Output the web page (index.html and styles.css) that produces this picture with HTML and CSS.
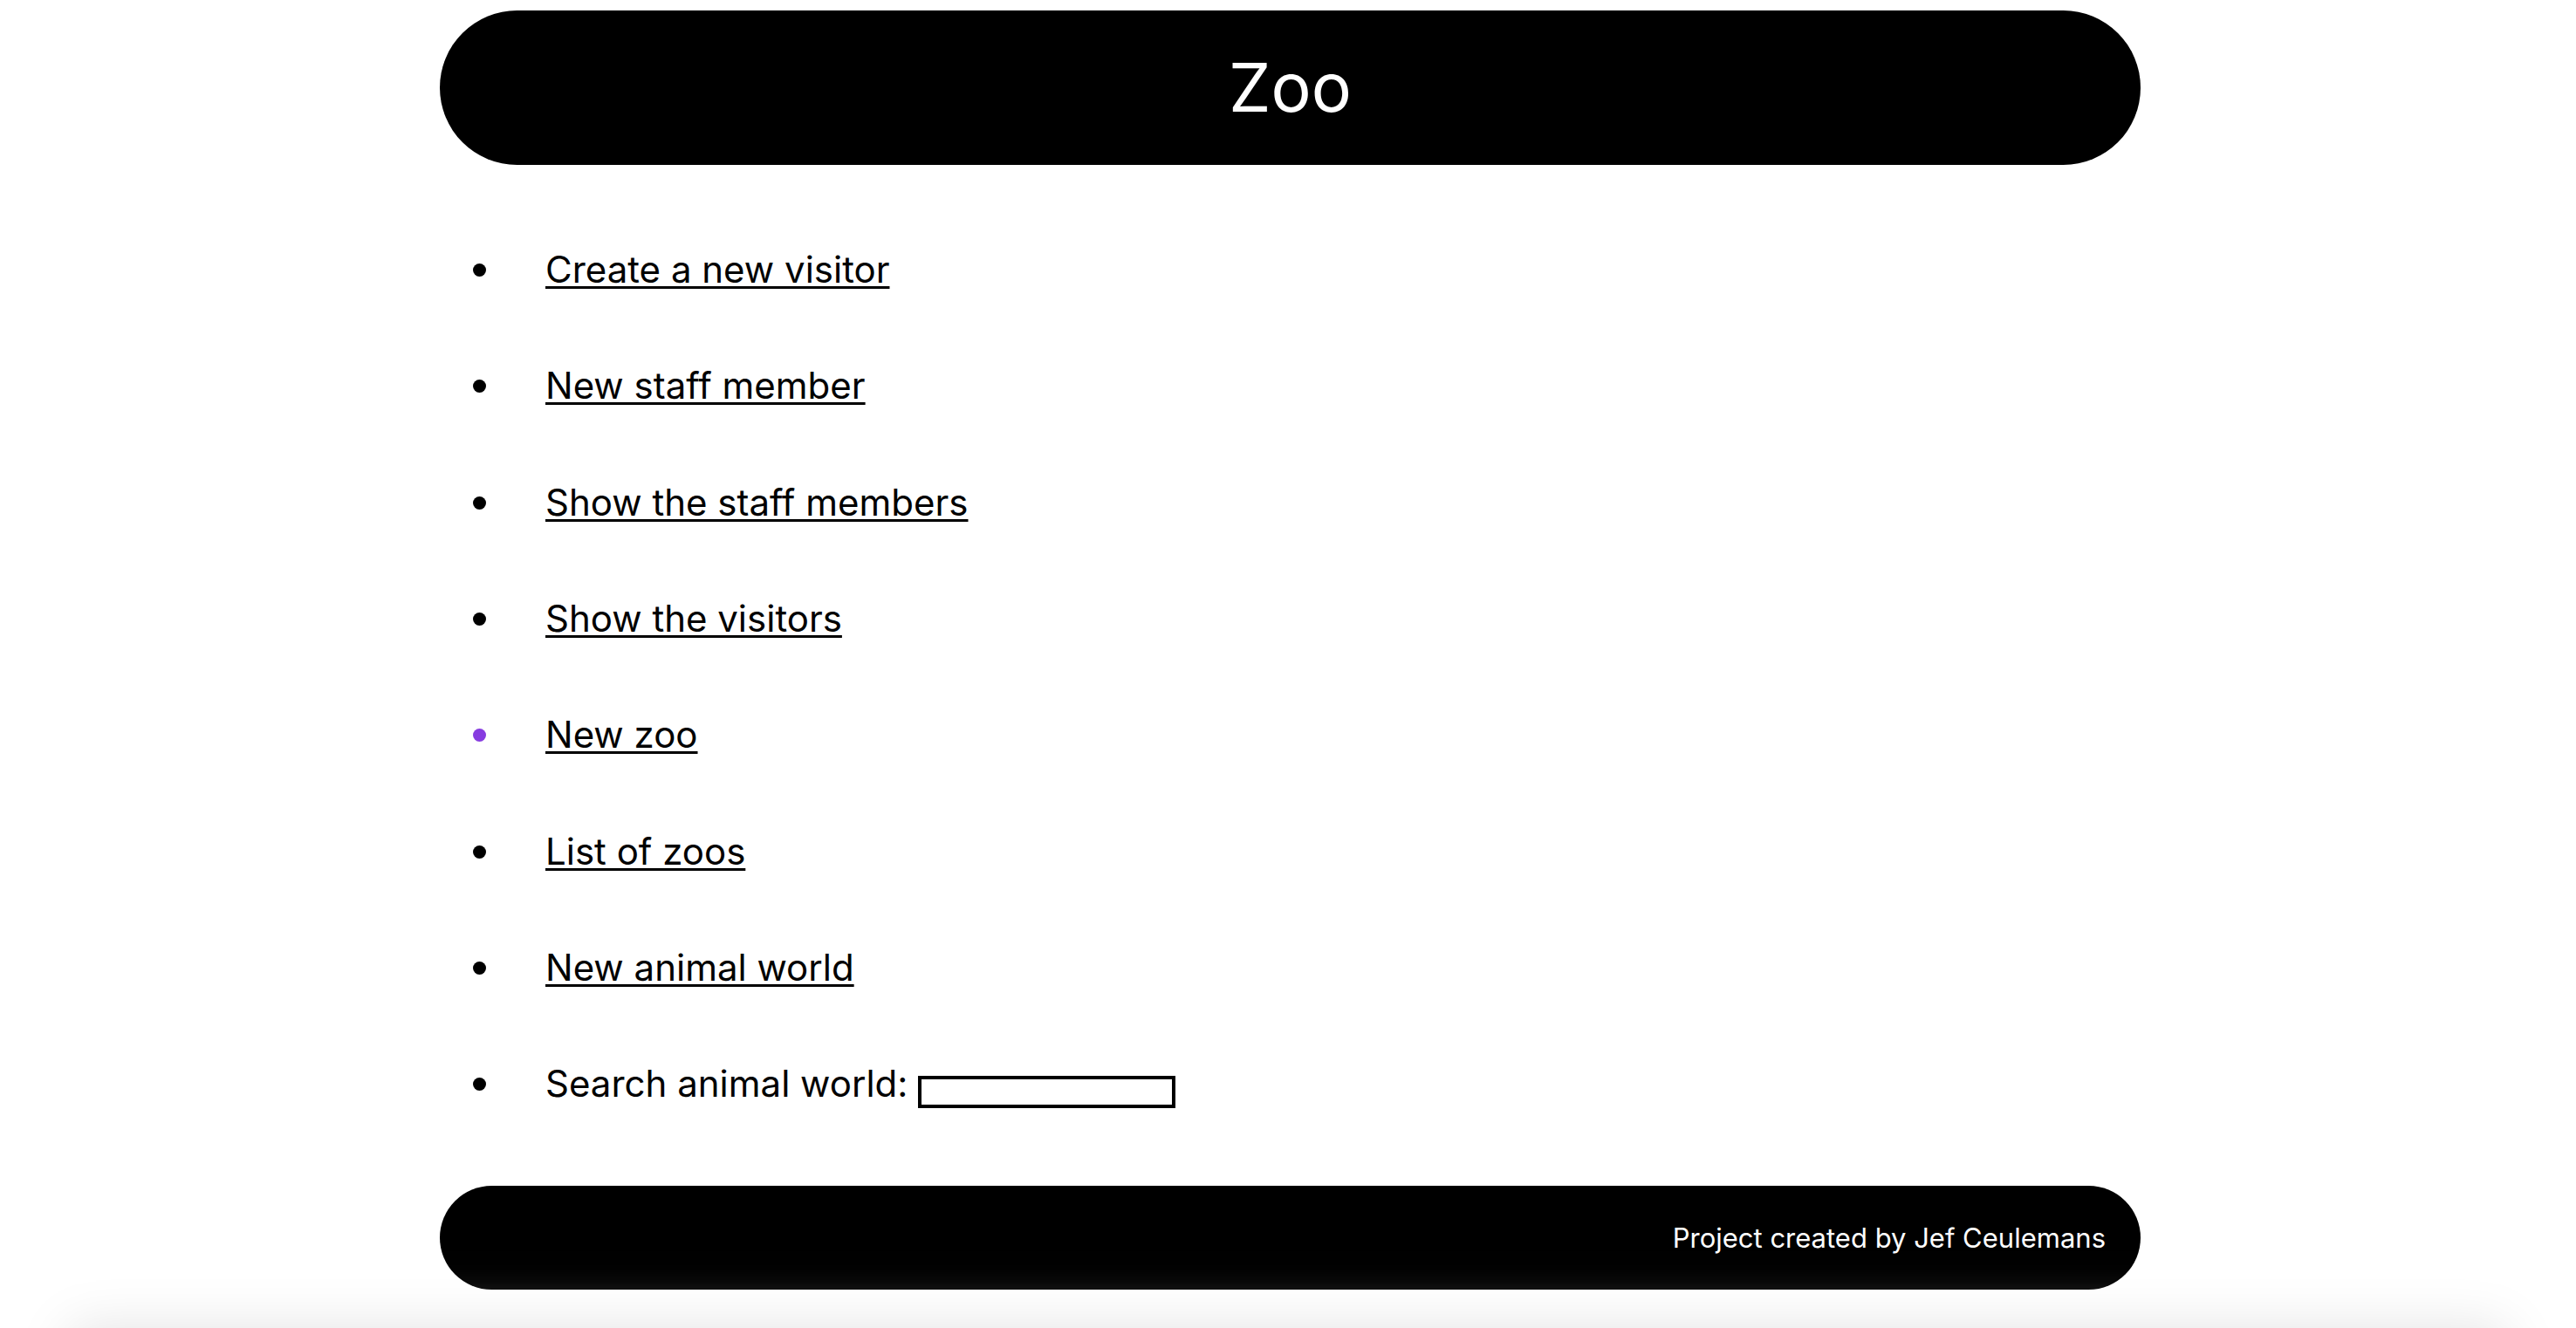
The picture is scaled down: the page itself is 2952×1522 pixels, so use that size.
FILE: index.html
```html
<!DOCTYPE html>
<html lang="en">
<head>
<meta charset="utf-8">
<title>Zoo</title>
<link rel="stylesheet" href="styles.css">
</head>
<body>
<div class="page">
  <header class="site-header">
    <h1 class="title">Zoo</h1>
  </header>
  <ul class="menu">
    <li class="menu-item"><a href="#" class="menu-link">Create a new visitor</a></li>
    <li class="menu-item"><a href="#" class="menu-link">New staff member</a></li>
    <li class="menu-item"><a href="#" class="menu-link">Show the staff members</a></li>
    <li class="menu-item"><a href="#" class="menu-link">Show the visitors</a></li>
    <li class="menu-item menu-item--active"><a href="#" class="menu-link">New zoo</a></li>
    <li class="menu-item"><a href="#" class="menu-link">List of zoos</a></li>
    <li class="menu-item"><a href="#" class="menu-link">New animal world</a></li>
    <li class="menu-item"><span class="search-label">Search animal world:</span> <input class="search-input" type="text"></li>
  </ul>
  <footer class="site-footer">
    <p class="credit">Project created by Jef Ceulemans</p>
  </footer>
</div>
<div class="fold-shadow"></div>
</body>
</html>
```

FILE: styles.css
```css
html, body {
  margin: 0;
  padding: 0;
  background: #ffffff;
}

body {
  padding-left: 5px;
  font-family: "Inter", "Liberation Sans", sans-serif;
  color: #000000;
  overflow: hidden;
}

.page {
  width: 1949px;
  margin: 0 auto;
}

.site-header {
  margin-top: 12px;
  height: 177px;
  background: #000000;
  border-radius: 89px;
  display: flex;
  align-items: center;
  justify-content: center;
}

.title {
  margin: 0;
  color: #ffffff;
  font-size: 77px;
  font-weight: 400;
  line-height: 1;
  letter-spacing: 0;
}

.menu {
  list-style: none;
  margin: 53px 0 0 0;
  padding: 0;
}

.menu-item {
  height: 133.33px;
  line-height: 133.33px;
  font-size: 42px;
  padding-left: 121px;
  position: relative;
}

.menu-item::before {
  content: "";
  position: absolute;
  left: 38px;
  top: 60px;
  width: 15px;
  height: 15px;
  border-radius: 50%;
  background: #000000;
}

.menu-item--active::before {
  background: #873ce0;
}

.menu-link {
  color: #000000;
  text-decoration: underline;
  text-decoration-thickness: 3px;
  text-underline-offset: 4px;
}

.search-label {
  color: #000000;
}

.search-input {
  box-sizing: border-box;
  width: 295px;
  height: 37px;
  border: 4px solid #000000;
  border-radius: 0;
  padding: 0 4px;
  margin: 0 0 -12px 0;
  font-size: 26px;
  background: #ffffff;
  vertical-align: middle;
  outline: none;
}

.site-footer {
  margin-top: 50px;
  height: 119px;
  background: #000000;
  border-radius: 60px;
  display: flex;
  align-items: center;
  justify-content: flex-end;
  padding-right: 40px;
  box-sizing: border-box;
}

.credit {
  margin: 0;
  color: #ffffff;
  font-size: 31px;
  line-height: 1;
}

.fold-shadow {
  height: 200px;
  margin: 75px 110px 0 105px;
  background: #e2e2e2;
  box-shadow: 0 0 60px 30px #e2e2e2;
}
```
